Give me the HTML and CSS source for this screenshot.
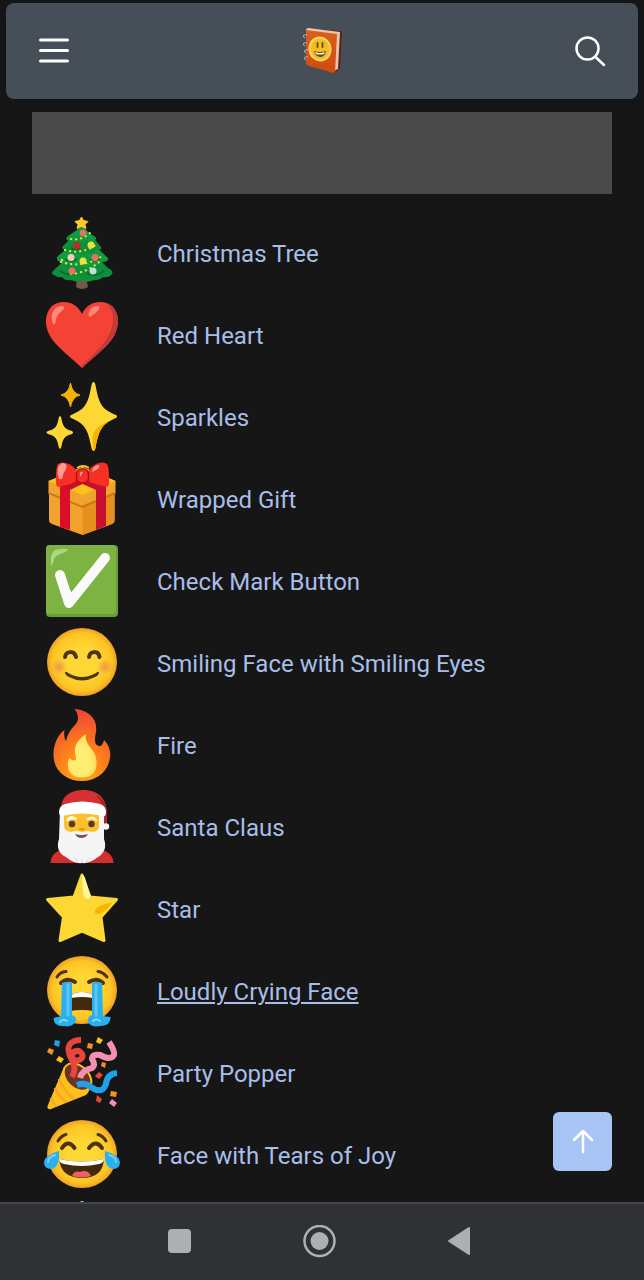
FILE: index.html
```html
<!DOCTYPE html>
<html lang="en">
<head>
  <meta charset="utf-8">
  <meta name="viewport" content="width=device-width, initial-scale=1">
  <title>Emojis</title>
  <link rel="stylesheet" href="styles.css">
</head>
<body>
  <!-- shared gradients -->
  <svg class="defs" width="0" height="0" aria-hidden="true">
    <defs>
      <radialGradient id="face" cx="50%" cy="50%" r="50%">
        <stop offset="0.4" stop-color="#fdd835"/>
        <stop offset="0.85" stop-color="#fcc424"/>
        <stop offset="1" stop-color="#ef9f26"/>
      </radialGradient>
      <radialGradient id="blush">
        <stop offset="0" stop-color="#ef8a55" stop-opacity="0.8"/>
        <stop offset="1" stop-color="#ef8a55" stop-opacity="0"/>
      </radialGradient>
      <radialGradient id="flame" cx="50%" cy="95%" r="95%">
        <stop offset="0.2" stop-color="#ff9c1a"/>
        <stop offset="0.6" stop-color="#f9701f"/>
        <stop offset="1" stop-color="#ee4437"/>
      </radialGradient>
      <radialGradient id="flameInner" cx="45%" cy="60%" r="60%">
        <stop offset="0" stop-color="#fff176"/>
        <stop offset="0.6" stop-color="#ffec70"/>
        <stop offset="1" stop-color="#ffd552"/>
      </radialGradient>
      <linearGradient id="cover" x1="0" y1="0" x2="0" y2="1">
        <stop offset="0" stop-color="#d9601b"/>
        <stop offset="1" stop-color="#cf4a10"/>
      </linearGradient>
    </defs>
  </svg>

  <header class="header">
    <button class="icon-button" aria-label="Menu">
      <svg width="32" height="32" viewBox="0 0 32 32" fill="none" stroke="#fff" stroke-width="3" stroke-linecap="round">
        <path d="M2.500 5H29.500M2.500 15.500H29.500M2.500 26H29.500"/>
      </svg>
    </button>
    <a class="logo" href="#" aria-label="Home">
      <svg width="44" height="50" viewBox="0 0 44 50">
        <path d="M7 2L41 5Q42 6 42 8L40 42L35 47L30 45Z" fill="#5b2416"/>
        <path d="M6 4Q6 2 9 2L40 6L38 43L34 45Z" fill="#e9c3ad"/>
        <path d="M6 4L37 8L35 47Q31 47 27 45L9 40Q6 39 6 36Z" fill="url(#cover)"/>
        <ellipse cx="20" cy="23" rx="11.500" ry="12.500" fill="#f8d66a" transform="rotate(-12 20 23)"/>
        <ellipse cx="20" cy="23" rx="9.500" ry="10.500" fill="#f3bc22" transform="rotate(-12 20 23)"/>
        <path d="M17.500 17V21M22.500 17V21" stroke="#6b4a10" stroke-width="1.800" stroke-linecap="round"/>
        <path d="M14 25Q20 27 26 25Q25 31 20 31Q15 30 14 25Z" fill="#6b4a10"/>
        <path d="M15 26Q20 28 25 26L24 28Q20 29 16 28Z" fill="#fff"/>
        <path d="M7 9Q3 8 3.500 11L5 12M7 17Q3 16 3.500 19L5 20M8 24Q4 23 4.500 26L6 27M8 31Q4 30 4.500 33L6 34" fill="none" stroke="#b9bdc3"/>
      </svg>
    </a>
    <button class="icon-button" aria-label="Search">
      <svg width="32" height="32" viewBox="0 0 32 32" fill="none" stroke="#fff" stroke-width="2.500" stroke-linecap="round">
        <circle cx="13.500" cy="13.500" r="11"/>
        <path d="M21.500 22L30 30"/>
      </svg>
    </button>
  </header>

  <main class="content">
    <div class="banner"></div>

    <ul class="emoji-list">
      <li class="emoji-item">
        <svg class="emoji" viewBox="0 0 72 72">
          <path d="M31 60H40L42 70Q36 74 30 70Z" fill="#795548"/>
          <path d="M20 42L8 53Q4 57 8 58Q11 61 16 60Q19 64 25 63Q31 66 36 64Q43 66 48 63Q53 64 57 60Q63 61 66 57Q68 54 62 51L52 41Z" fill="#0f8f3b"/>
          <path d="M24 29L12 39Q9 43 14 45Q18 49 23 47Q29 52 35 49Q42 52 47 48Q53 49 56 45Q63 45 62 41L48 28Z" fill="#129a43"/>
          <path d="M27 19L18 28Q14 31 19 33Q24 37 28 35Q35 39 41 36Q47 37 50 33Q57 33 55 30L45 18Z" fill="#0f8f3b"/>
          <path d="M36 8L31 13L22 19Q18 22 23 24Q28 26 31 23Q36 27 41 23Q45 26 49 23Q52 21 48 19Q42 16 36 8Z" fill="#129a43"/>
          <path d="M14 54Q22 60 31 55M41 56Q52 61 58 53M19 42Q26 46 31 42M44 43Q52 45 55 40M25 31Q30 34 34 31" fill="none" stroke="#0b6b28" stroke-width="2"/>
          <path d="M25 22Q36 24 45 15M19 33Q37 38 51 27M15 45Q38 52 58 38M16 43L21 47M25 57Q40 56 53 45" fill="none" stroke="#e5e83a" stroke-width="2.200" stroke-linecap="round" stroke-dasharray="0.1 5"/>
          <circle cx="37" cy="16" r="3.300" fill="#e57362"/>
          <circle cx="31" cy="28.500" r="3.600" fill="#c62828"/>
          <circle cx="45" cy="28" r="3.500" fill="#e9e63a"/>
          <circle cx="25" cy="40.500" r="3.500" fill="#f3cfb0"/>
          <circle cx="49" cy="40.500" r="3.500" fill="#e57362"/>
          <circle cx="37" cy="44" r="3.500" fill="#e9e63a"/>
          <circle cx="26" cy="54" r="3.500" fill="#e57362"/>
          <circle cx="47" cy="54" r="3.500" fill="#b6e3d4"/>
          <path d="M35.500 0L37.500 3.500L42 4.500L39 7.500L40 11.500L35.500 9.500L31 11.500L32 7.500L29 4.500L33.500 3.500Z" fill="#fdc92c" stroke="#fdc92c" stroke-linejoin="round"/>
        </svg>
        <a class="emoji-link" href="#">Christmas Tree</a>
      </li>
      <li class="emoji-item">
        <svg class="emoji" viewBox="0 0 72 72">
          <path d="M36 15C30 1 13 0 5 8C-2 16 -1 28 4 37C10 48 25 58 36 69C47 58 62 48 68 37C73 28 74 16 67 8C59 0 42 1 36 15Z" fill="#f44336"/>
          <path d="M60 4Q70 13 66 28C62 44 45 57 36 67V69C47 58 62 48 68 37C73 28 74 16 67 8Q64 5 60 4Z" fill="#c33b37"/>
          <path d="M8 26C3 18 7 7 16 7C22 8 15 12 12 16C9 20 10 25 8 26Z" fill="#ff8a75"/>
          <path d="M43 17C41 12 47 6 52 7C56 9 51 13 48 15C45 17 44 19 43 17Z" fill="#ff8a75"/>
        </svg>
        <a class="emoji-link" href="#">Red Heart</a>
      </li>
      <li class="emoji-item">
        <svg class="emoji" viewBox="0 0 72 72">
          <path d="M47.500 1Q49 1 49.500 4C53 24 56 28 70 34Q72 35.500 70 37C56 43 53 48 49.500 67Q49 70 47.500 70Q46 70 45.500 67C42 48 39 43 25 37Q23 35.500 25 34C39 28 42 24 45.500 4Q46 1 47.500 1Z" fill="#fdd835"/>
          <path d="M70 37C56 43 53 48 49.500 67Q49 70 47.500 70Q46 60 47 54C49 46 57 42 70 37Z" fill="#f4b400"/>
          <path d="M14 35Q15 35 15.500 38C17 46 19 48 26 50Q28 51.500 26 53C19 55 17 57 15.500 65Q15 68 14 68Q13 68 12.500 65C11 57 9 55 2 53Q-1 51.500 2 50C9 48 11 46 12.500 38Q13 35 14 35Z" fill="#fdd835"/>
          <path d="M24.500 2Q26 12 34 14Q26 16 24.500 26Q23 16 15 14Q23 12 24.500 2Z" fill="#f4b400" stroke="#f4b400" stroke-linejoin="round"/>
        </svg>
        <a class="emoji-link" href="#">Sparkles</a>
      </li>
      <li class="emoji-item">
        <svg class="emoji" viewBox="0 0 72 72">
          <path d="M36.500 4L69.500 18V30L68.500 31V58Q68 60 66 61L36.500 72L6 61Q3.500 60 3 58V31L2.500 30V18Z" fill="#f2a32f"/>
          <path d="M36.500 42L68.500 29V58Q68 60 66 61L36.500 72Z" fill="#e8901f"/>
          <path d="M2.500 18L36.500 4L69.500 18L36.500 32Z" fill="#fcc21b"/>
          <path d="M2.500 29L36.500 43L69.500 29V31L36.500 45L2.500 31Z" fill="#c77718"/>
          <path d="M14 22H24V67L14 64Z" fill="#dc0d28"/>
          <path d="M50 22H60V63L50 67Z" fill="#c8102e"/>
          <path d="M14 23L30 16H42L60 23L50 27L36.500 21L24 27Z" fill="#c8102e"/>
          <path d="M31 5Q37 1 43 5" fill="none" stroke="#fcc21b" stroke-width="2"/>
          <path d="M12 1Q16 -2 23 1Q32 6 31 12Q32 19 24 21L13 24Q9 24 10 14Q10 4 12 1Z" fill="#f92f25"/>
          <path d="M61 1Q57 -2 50 1Q41 6 42 12Q41 19 49 21L60 24Q64 24 63 14Q63 4 61 1Z" fill="#f92f25"/>
          <rect x="30.500" y="6" width="12" height="14" rx="5" fill="#f92f25" stroke="#a81119" stroke-width="1.500"/>
          <path d="M13 16Q9 4 16 0Q22 0 20 6Q17 10 16 16ZM46 9Q47 2 53 2Q54 5 50 7Z" fill="#ff9d94"/>
          <path d="M34 10Q35 8 37 9Q36 11 34 14Z" fill="#ff9d94"/>
        </svg>
        <a class="emoji-link" href="#">Wrapped Gift</a>
      </li>
      <li class="emoji-item">
        <svg class="emoji" viewBox="0 0 72 72">
          <rect width="72" height="72" rx="4" fill="#689f38"/>
          <rect width="70" height="69" rx="4" fill="#7cb342"/>
          <path d="M5 20Q4 10 7 7Q10 3 22 4Q22 6 17 8Q8 10 7 18Q6 21 5 20Z" fill="#aed581"/>
          <path d="M14 30L23 58L59 13" fill="none" stroke="#fafafa" stroke-width="10" stroke-linecap="round" stroke-linejoin="round"/>
          <path d="M17 30L25 47L28 54L23 60Z" fill="#fafafa"/>
        </svg>
        <a class="emoji-link" href="#">Check Mark Button</a>
      </li>
      <li class="emoji-item">
        <svg class="emoji" viewBox="0 0 72 72">
          <ellipse cx="36" cy="35" rx="35" ry="34" fill="url(#face)"/>
          <circle cx="13" cy="40" r="8" fill="url(#blush)"/>
          <circle cx="59" cy="40" r="8" fill="url(#blush)"/>
          <path d="M19 30C20 24 28 23 30 30M43 30C44 24 52 23 53.500 30" fill="none" stroke="#4e3310" stroke-width="4" stroke-linecap="round"/>
          <path d="M19 45Q20 44 22 46Q36 54 50 46Q52 44 53 45.500Q53 48 49 50Q36 57 23 50Q19 48 19 45Z" fill="#4e3310"/>
        </svg>
        <a class="emoji-link" href="#">Smiling Face with Smiling Eyes</a>
      </li>
      <li class="emoji-item">
        <svg class="emoji" viewBox="0 0 72 72">
          <path d="M28.500 0C42 1 52 9 50 23C49 28 48 34 51 36C55 39 57 35 58 31C63 36 65 42 64 49C62 63 50 72 36 72C20 72 8 62 7.500 47C7 36 12 25 18.500 21C18 25 18 29 20 32C21 26 24 21 29 16C34 11 32 4 28.500 0Z" fill="url(#flame)"/>
          <path d="M40 25C39 31 41 34 44 38C49 44 51 48 50.500 56C50 64 44 69 36 68.500C28 69 22 64 22 57C22 53 22 51 24 49C25 51 27 52 29.500 51C31 49 29 47 29 43C28 35 34 29 40 25Z" fill="url(#flameInner)"/>
        </svg>
        <a class="emoji-link" href="#">Fire</a>
      </li>
      <li class="emoji-item">
        <svg class="emoji" viewBox="0 0 72 72">
          <path d="M4.500 72Q5 61 18 58H53Q67 61 67.500 72Z" fill="#d32f2f"/>
          <path d="M15 16C16 4 26 -1 37 -1C54 -1 61 9 61 23V34H55L50 16Z" fill="#d53032"/>
          <path d="M50 4C58 8 61 14 61 23V34H57V18Q55 10 50 4Z" fill="#b0202a"/>
          <path d="M14 19H58V48C61 56 58 63 52 66Q43 73 36 72Q28 73 20 66C13 63 10 56 13 48Z" fill="#f5f5f5"/>
          <path d="M18 22H53V36Q52 41 46 41Q41 39 36 41Q30 39 25 41Q18 40 18 34Z" fill="#fbc02d"/>
          <path d="M13 21Q13 15 19 13Q36 8 54 13Q60 15 60 21Q60 26 57 25Q36 20 16 25Q13 25 13 21Z" fill="#fff"/>
          <path d="M21 28Q25 23 31 28Q25 27 21 30ZM41 28Q47 23 51 30Q46 26 41 29Z" fill="#fff8dd" stroke="#fff8dd"/>
          <circle cx="26" cy="33" r="3.200" fill="#543930"/>
          <circle cx="45.500" cy="33" r="3.200" fill="#543930"/>
          <path d="M34 38Q36 39 38 38" fill="none" stroke="#e59600" stroke-width="2" stroke-linecap="round"/>
          <path d="M29 43Q36 45 42 43Q40 47 35.500 47Q31 47 29 43Z" fill="#795548"/>
          <path d="M28 66Q31 69 32 72M36 68V72M44 66Q41 69 40 72" fill="none" stroke="#d8d8d8"/>
          <circle cx="60" cy="35.500" r="3.200" fill="#f5f5f5"/>
        </svg>
        <a class="emoji-link" href="#">Santa Claus</a>
      </li>
      <li class="emoji-item">
        <svg class="emoji" viewBox="0 0 72 72">
          <path d="M36 2L44 24L70.500 26.500L55 44L58 67.500L36 58L14 67.500L17.500 44L1.500 26.500L28 24Z" fill="#fdd835" stroke="#fdd835" stroke-width="3" stroke-linejoin="round"/>
          <path d="M36 3Q38 2 39 5L44 22Q45 26 41 26Q38 25 37 20Z" fill="#fff59d"/>
          <path d="M66 30L60 37Q53 43 49 40Q48 35 56 32Q62 30 66 30Z" fill="#f4b400"/>
        </svg>
        <a class="emoji-link" href="#">Star</a>
      </li>
      <li class="emoji-item">
        <svg class="emoji" viewBox="0 0 72 72">
          <ellipse cx="36" cy="35" rx="35" ry="34" fill="url(#face)"/>
          <path d="M11 22Q14 17 20 16.500M52 16.500Q57 17 61 22" fill="none" stroke="#4e3310" stroke-width="3" stroke-linecap="round"/>
          <path d="M15 28Q21 22 29 27M43 27Q51 22 57 28" fill="none" stroke="#4e3310" stroke-width="4" stroke-linecap="round"/>
          <path d="M24 42Q27 37 36 37Q45 37 48 42V56Q36 54 24 56Z" fill="#422b0d"/>
          <path d="M25 41Q28 37 36 37Q44 37 47 41V43Q36 41 25 43Z" fill="#fff"/>
          <path d="M16 28Q21 26 26 28V60Q31 62 30 66Q26 73 18 71Q8 72 7.500 63Q12 62 15 61ZM46 28Q51 26 56 28L57 61Q63 62 64.500 62Q65 71 54 71Q44 73 41.500 66Q42 61 46 60Z" fill="#29b0ee"/>
          <path d="M22 30V60M50 30V60" fill="none" stroke="#62c2f1" stroke-width="3" stroke-linecap="round"/>
          <path d="M14 67Q17 63 21 66M47 66Q50 63 54 66" fill="none" stroke="#8fd5f7" stroke-width="2" stroke-linecap="round"/>
        </svg>
        <a class="emoji-link active" href="#">Loudly Crying Face</a>
      </li>
      <li class="emoji-item">
        <svg class="emoji" viewBox="0 0 72 72">
          <path d="M18 30L1.500 69Q1 73 5 72L40 58Q48 50 41 38Z" fill="#fcc21b"/>
          <path d="M13 42Q18 54 28 62M9 51Q13 60 20 65M5 61Q7 67 11 69" fill="none" stroke="#f9a825" stroke-width="3"/>
          <ellipse cx="31.500" cy="40" rx="16" ry="11" fill="#6b3325" stroke="#fcc21b" stroke-width="2" transform="rotate(44 31.500 40)"/>
          <path d="M26 40Q31 31 26 23Q20 12 24 7Q28 3 35 3M25 20Q27 13 33 14Q39 18 35 22Q29 26 25 19" fill="none" stroke="#e8453c" stroke-width="6"/>
          <path d="M34 41Q36 33 46 31Q50 28 46 22Q46 17 54 18Q65 24 68 18Q69 14 63 5" fill="none" stroke="#f48fb1" stroke-width="6"/>
          <path d="M31 48Q39 45 45 50Q56 58 60 47Q61 37 71 36" fill="none" stroke="#1ea1e8" stroke-width="6"/>
          <path d="M9 3L14 4L13 10L8 8Z" fill="#1ea1e8"/>
          <path d="M3 11L8 13L6 18L1 15ZM42 6L47 7L46 12L41 11ZM56 25L60 26L59 31L55 29ZM65 54L71 55L70 60L64 59Z" fill="#f39222"/>
          <path d="M13 19L18 22L15 26L10 23ZM52 0L57 3L54 7L50 5Z" fill="#fcc21b"/>
          <path d="M53 35L57 38L53 42L49 39ZM51 58L56 62L54 66L50 64Z" fill="#e8453c"/>
          <path d="M66 62L71 66L68 70L63 66Z" fill="#f48fb1"/>
        </svg>
        <a class="emoji-link" href="#">Party Popper</a>
      </li>
      <li class="emoji-item">
        <svg class="emoji" viewBox="0 0 72 72">
          <ellipse cx="36" cy="35" rx="35" ry="34" fill="url(#face)"/>
          <path d="M12 22Q15 17 20 15.500M52 15.500Q57 17 60 22" fill="none" stroke="#4e3310" stroke-width="3" stroke-linecap="round"/>
          <path d="M16 29Q22 20 28.500 29M43 29Q50 20 56 29" fill="none" stroke="#4e3310" stroke-width="4" stroke-linecap="round"/>
          <path d="M13 40Q36 45 58 40Q57 59 36 59Q15 59 13 40Z" fill="#422b0d"/>
          <path d="M13 40Q36 45 58 40Q58 44 53 45Q36 49 18 45Q13 44 13 40Z" fill="#fff"/>
          <path d="M26 57Q28 51 34 53Q42 50 45 57Q36 60 26 57Z" fill="#ed5f62"/>
          <path d="M13 32Q14 49 5 50Q-2 50 -2 43Q-1 36 13 32ZM59 32Q58 49 67 50Q74 50 74 43Q73 36 59 32Z" fill="#29b0ee"/>
          <path d="M9 36Q2 38 2 43M63 36Q70 38 70 43" fill="none" stroke="#7dcdf4" stroke-width="2" stroke-linecap="round"/>
        </svg>
        <a class="emoji-link" href="#">Face with Tears of Joy</a>
      </li>
      <li class="emoji-item">
        <svg class="emoji" viewBox="0 0 72 72" fill="none" stroke="#b9cdf0" stroke-width="4" stroke-linecap="round">
          <path d="M36 2V70M7 19L65 53M7 53L65 19M28 8L36 16L44 8M28 64L36 56L44 64"/>
        </svg>
      </li>
    </ul>

    <button class="to-top" aria-label="Back to top">
      <svg width="22" height="26" viewBox="0 0 22 26" fill="none" stroke="#fff" stroke-width="2.500" stroke-linecap="round" stroke-linejoin="round">
        <path d="M11 23V2M2 11L11 2L20 11"/>
      </svg>
    </button>
  </main>

  <nav class="system-bar">
    <button class="system-button" aria-label="Recent apps">
      <svg width="34" height="34" viewBox="0 0 34 34"><rect x="5" y="4" width="23" height="24" rx="4" fill="#aeafb1"/></svg>
    </button>
    <button class="system-button" aria-label="Home screen">
      <svg width="34" height="34" viewBox="0 0 34 34">
        <circle cx="16.500" cy="16" r="15" fill="none" stroke="#aeafb1" stroke-width="2.500"/>
        <circle cx="16.500" cy="16" r="9" fill="#aeafb1"/>
      </svg>
    </button>
    <button class="system-button" aria-label="Back">
      <svg width="34" height="34" viewBox="0 0 34 34"><path d="M6 16L26 3V29Z" fill="#aeafb1" stroke="#aeafb1" stroke-width="2" stroke-linejoin="round"/></svg>
    </button>
  </nav>
</body>
</html>
```
FILE: styles.css
```css
* {
  box-sizing: border-box;
}

body {
  margin: 0;
  height: 100vh;
  display: flex;
  flex-direction: column;
  overflow: hidden;
  background: #161616;
  color: #a8bee8;
  font-family: Roboto, "Liberation Sans", sans-serif;
  font-size: 24px;
}

button {
  padding: 0;
  border: none;
  background: none;
  cursor: pointer;
}

svg {
  display: block;
}

.defs {
  position: absolute;
}

.header {
  flex: none;
  height: 96px;
  margin: 3px 6px 0;
  padding: 0 32px;
  display: flex;
  align-items: center;
  justify-content: space-between;
  background: #464e57;
  border-radius: 8px;
  box-shadow: 0 2px 10px #10161c;
}

.content {
  position: relative;
  flex: 1;
  min-height: 0;
  padding: 13px 32px 0;
  overflow: hidden;
}

.banner {
  height: 82px;
  background: #4a4a4a;
}

.emoji-list {
  margin: 18px 0 0;
  padding: 0 14px;
  list-style: none;
}

.emoji-item {
  display: flex;
  align-items: center;
  gap: 39px;
  height: 82px;
}

.emoji {
  flex: none;
  width: 72px;
  height: 72px;
  overflow: visible;
}

.emoji-link {
  padding-top: 2px;
  color: inherit;
  line-height: 32px;
  text-decoration: none;
}

.emoji-link:hover,
.emoji-link.active {
  text-decoration: underline;
  text-decoration-thickness: 2px;
  text-underline-offset: 2px;
}

.to-top {
  position: absolute;
  right: 32px;
  bottom: 31px;
  width: 59px;
  height: 59px;
  display: flex;
  align-items: center;
  justify-content: center;
  background: #a8c4f5;
  border-radius: 6px;
}

.system-bar {
  flex: none;
  height: 78px;
  padding-right: 4px;
  display: flex;
  align-items: center;
  justify-content: center;
  background: #303135;
  border-top: 2px solid #434447;
}

.system-button {
  width: 140px;
  height: 76px;
  display: flex;
  align-items: center;
  justify-content: center;
}
```
